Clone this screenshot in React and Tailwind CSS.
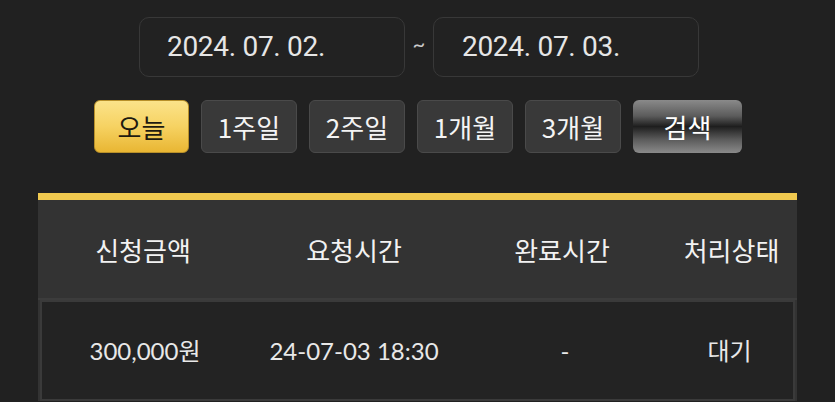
const periods = ['1주일', '2주일', '1개월', '3개월'];

const App = () => {
    return (
        <div className="w-[835px] h-[402px] overflow-hidden bg-[#212121] text-[#eeeeee] font-['Lato','Noto_Sans_CJK_KR',sans-serif]">
            {/* Date range */}
            <div className="flex items-center justify-center pt-[17px] pl-[3px]">
                <div className="w-[266px] h-[60px] rounded-[10px] border border-[#383838] bg-[#222222] flex items-center pl-[27px] text-[28px] tracking-[-0.3px] text-[#e6e6e6] font-['Roboto','Noto_Sans_CJK_KR',sans-serif]">
                    2024. 07. 02.
                </div>
                <span className="w-[28px] text-center text-[22px] text-[#cccccc] leading-none -mt-[6px]">~</span>
                <div className="w-[266px] h-[60px] rounded-[10px] border border-[#383838] bg-[#222222] flex items-center pl-[28px] text-[28px] tracking-[-0.3px] text-[#e6e6e6] font-['Roboto','Noto_Sans_CJK_KR',sans-serif]">
                    2024. 07. 03.
                </div>
            </div>

            {/* Period buttons */}
            <div className="flex justify-center gap-[12px] mt-[23px] pl-[1px]">
                <button className="w-[95px] h-[53px] rounded-[6px] border border-[#b8902a] bg-[linear-gradient(180deg,#fbe38a_0%,#f6d262_50%,#e9b633_100%)] text-[#1e1a10] text-[26px] leading-none font-['Noto_Sans_CJK_KR',sans-serif]">
                    오늘
                </button>
                {periods.map((p) => (
                    <button
                        key={p}
                        className="w-[96px] h-[53px] rounded-[6px] border border-[#4a4a4a] bg-[#393939] text-[#f4f4f4] text-[26px] leading-none font-['Noto_Sans_CJK_KR',sans-serif]"
                    >
                        {p}
                    </button>
                ))}
                <button className="w-[109px] h-[53px] rounded-[6px] bg-[linear-gradient(180deg,#8a8a8a_0%,#5c5c5c_30%,#1e1e1e_50%,#5c5c5c_75%,#8a8a8a_100%)] text-white text-[26px] leading-none font-['Noto_Sans_CJK_KR',sans-serif]">
                    검색
                </button>
            </div>

            {/* Table */}
            <div className="mt-[40px] mx-[38px] bg-[#333333] border-t-[7px] border-[#f0c94f]">
                <div className="grid grid-cols-[210px_212px_204px_1fr] h-[100px] items-center text-[26px] text-[#f2f2f2] font-['Noto_Sans_CJK_KR',sans-serif] border-b-2 border-[#3c3c3c]">
                    <div className="text-center whitespace-nowrap">신청금액</div>
                    <div className="text-center whitespace-nowrap">요청시간</div>
                    <div className="text-center whitespace-nowrap">완료시간</div>
                    <div className="text-center whitespace-nowrap pl-[2px]">처리상태</div>
                </div>
                <div className="mx-[2px] border-2 border-[#3a3a3a] bg-[#232323] grid grid-cols-[206px_212px_204px_1fr] h-[101px] items-center text-[24px] text-[#e8e8e8]">
                    <div className="text-center whitespace-nowrap">300,000원</div>
                    <div className="text-center whitespace-nowrap">24-07-03 18:30</div>
                    <div className="text-center pl-[6px]">-</div>
                    <div className="text-center pl-[2px]">대기</div>
                </div>
            </div>
        </div>
    );
};

export default App;
